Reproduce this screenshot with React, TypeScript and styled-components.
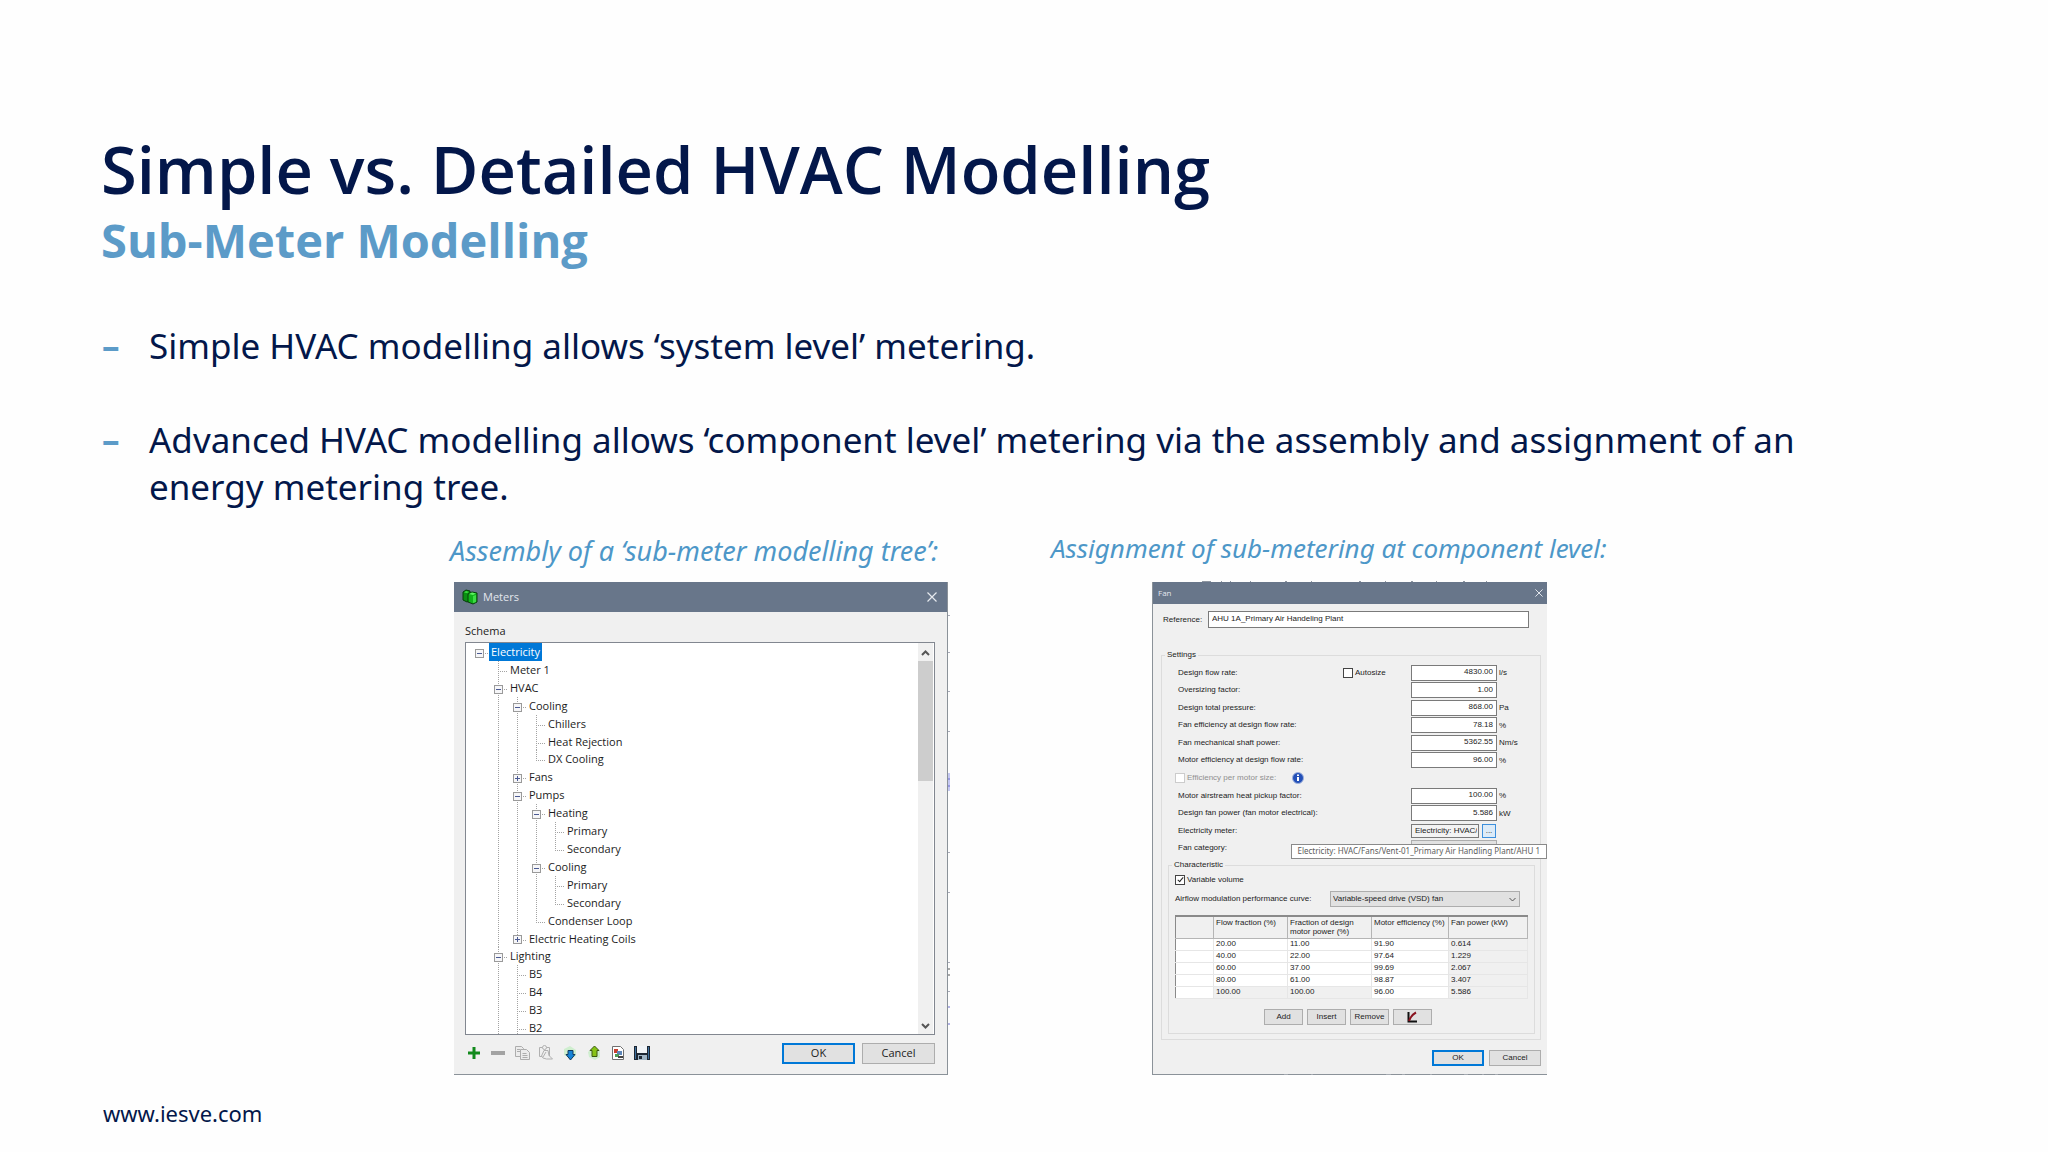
import React from "react";
import styled, { createGlobalStyle, css } from "styled-components";

const sans = `"Noto Sans", "Open Sans", sans-serif`;
const heading = `"Open Sans", "Noto Sans", sans-serif`;
const dialogFont = `"Liberation Sans", Roboto, sans-serif`;

const GlobalStyle = createGlobalStyle`
  *, *::before, *::after { box-sizing: border-box; }
  body { margin: 0; background: #fefefe; }
  button, input, select { margin: 0; padding: 0; font: inherit; color: inherit; border-radius: 0; }
`;

/* ---------- slide ---------- */

const Slide = styled.main`
  min-height: 100vh;
  padding: 133px 101px 24px;
  color: #03174a;
  font-family: ${sans};
`;
const Title = styled.h1`
  margin: 0 0 5px;
  font: 600 65px/72px ${heading};
`;
const Subtitle = styled.h2`
  margin: 0;
  color: #5c9bc8;
  font: bold 47px/60px ${heading};
`;
const Points = styled.ul`
  display: flex;
  flex-direction: column;
  gap: 47px;
  max-width: 1760px;
  margin: 52px 0 0;
  padding: 0;
  list-style: none;
  font-size: 35px;
  line-height: 47px;
`;
const Point = styled.li`
  display: flex;
  &::before { content: "–"; flex: 0 0 48px; padding-left: 1px; color: #5c9bc8; font-weight: bold; }
`;
const Figures = styled.div`
  display: flex;
  align-items: flex-end;
  gap: 103px;
  margin-top: 20px;
  padding-left: 349px;
`;
const Figure = styled.figure`
  display: flex;
  flex-direction: column;
  margin: 0;
`;
const Caption = styled.figcaption<{ $size: number; $below: number }>`
  margin-bottom: ${(p) => p.$below}px;
  color: #4d97c8;
  font-size: ${(p) => p.$size}px;
  font-style: italic;
  line-height: 36px;
  white-space: nowrap;
`;
const Site = styled.footer`
  margin-top: 23px;
  padding-left: 2px;
  font-size: 22px;
  line-height: 30px;
`;
const SiteLink = styled.a`
  color: inherit;
  text-decoration: none;
`;

/* ---------- shared dialog parts ---------- */

const TitleBar = styled.header<{ $height: number }>`
  display: flex;
  align-items: center;
  height: ${(p) => p.$height}px;
  background: #68768a;
  color: #e3e7ed;
  font-family: ${heading};
`;
const CloseButton = styled.button<{ $edge: number }>`
  display: flex;
  margin: 0 ${(p) => p.$edge}px 0 auto;
  border: 0;
  background: none;
`;
const PushButton = styled.button<{ $w: number; $h: number; $primary?: boolean }>`
  display: flex;
  align-items: center;
  justify-content: center;
  width: ${(p) => p.$w}px;
  height: ${(p) => p.$h}px;
  border: 1px solid #adadad;
  background: #e1e1e1;
  ${(p) => p.$primary && css`border: 2px solid #0078d7;`}
`;

/* ---------- meters dialog ---------- */

const Meters = styled.section`
  position: relative;
  display: flex;
  flex-direction: column;
  width: 494px;
  height: 493px;
  margin-left: 4px;
  border: 1px solid #8b9299;
  border-width: 0 1px 1px 0;
  background: #f0f0f0;
  color: #1c1c1c;
  font: 11px/18px ${heading};
`;
const MetersIcon = styled.svg`
  margin-left: 8px;
`;
const MetersTitle = styled.h3`
  margin: 0 0 0 5px;
  font: inherit;
`;
const Schema = styled.div`
  margin: 10px 11px 2px;
`;
const TreeBox = styled.div`
  display: flex;
  flex: 1;
  min-height: 0;
  margin: 0 12px 0 11px;
  padding: 0 1px 0 4px;
  overflow: hidden;
  border: 1px solid #828790;
  background: #fff;
`;
const Tree = styled.ul`
  display: grid;
  flex: 1;
  grid-auto-rows: 1fr;
  height: 394px;
  margin: 0;
  padding: 0;
  list-style: none;
`;
const TreeRow = styled.li`
  display: flex;
`;
const dots = "#a3a3a3 0 1px, transparent 1px 2px";
const Guide = styled.span<{ $kind: string }>`
  display: flex;
  align-items: center;
  justify-content: center;
  width: 19px;
  background-repeat: no-repeat;
  ${(p) => p.$kind === "v" && css`
    background-image: repeating-linear-gradient(180deg, ${dots});
    background-size: 1px 100%;
    background-position: 9px 0;
  `}
  ${(p) => p.$kind === "t" && css`
    background-image: repeating-linear-gradient(180deg, ${dots}), repeating-linear-gradient(90deg, ${dots});
    background-size: 1px 100%, 9px 1px;
    background-position: 9px 0, 9px 10px;
  `}
  ${(p) => p.$kind === "l" && css`
    background-image: repeating-linear-gradient(180deg, ${dots}), repeating-linear-gradient(90deg, ${dots});
    background-size: 1px 10px, 9px 1px;
    background-position: 9px 0, 9px 10px;
  `}
  ${(p) => p.$kind === "r" && css`
    background-image: repeating-linear-gradient(90deg, ${dots});
    background-size: 9px 1px;
    background-position: 9px 10px;
  `}
`;
const Toggle = styled.button<{ $open: boolean }>`
  width: 9px;
  height: 9px;
  margin-top: 3px;
  border: 1px solid #9a9a9a;
  background-color: #f6f6f8;
  background-image: linear-gradient(#4b5a93, #4b5a93), linear-gradient(#4b5a93, #4b5a93);
  background-size: 5px 1px, ${(p) => (p.$open ? "0 0" : "1px 5px")};
  background-position: center;
  background-repeat: no-repeat;
`;
const NodeLabel = styled.span<{ $selected?: boolean }>`
  padding: 0 2px;
  line-height: 17px;
  ${(p) => p.$selected && css`background: #0078d7; color: #fff;`}
`;
const ScrollBar = styled.div`
  display: flex;
  flex-direction: column;
  width: 15px;
  padding-top: 1px;
  background: #f0f0f0;
`;
const ScrollButton = styled.button`
  display: flex;
  align-items: center;
  justify-content: center;
  height: 17px;
  border: 0;
  background: none;
  &:last-child { margin-top: auto; }
`;
const Thumb = styled.div`
  height: 120px;
  background: #cdcdcd;
`;
const MetersFooter = styled.div`
  display: flex;
  align-items: center;
  gap: 8px;
  height: 39px;
  padding: 0 12px 3px;
`;
const Tool = styled.button`
  display: flex;
  width: 16px;
  height: 16px;
  border: 0;
  background: none;
`;
const Actions = styled.div`
  display: flex;
  gap: 7px;
  margin-left: auto;
`;
const EdgeMarks = styled.svg`
  position: absolute;
  top: 0;
  left: 100%;
`;

type Node = [label: string, guides: string, open?: boolean];
const nodes: Node[] = [
  ["Electricity", "r", true],
  ["Meter 1", "-t"],
  ["HVAC", "-t", true],
  ["Cooling", "-vt", true],
  ["Chillers", "-vvt"],
  ["Heat Rejection", "-vvt"],
  ["DX Cooling", "-vvl"],
  ["Fans", "-vt", false],
  ["Pumps", "-vt", true],
  ["Heating", "-vvt", true],
  ["Primary", "-vvvt"],
  ["Secondary", "-vvvl"],
  ["Cooling", "-vvt", true],
  ["Primary", "-vvvt"],
  ["Secondary", "-vvvl"],
  ["Condenser Loop", "-vvl"],
  ["Electric Heating Coils", "-vl", false],
  ["Lighting", "-t", true],
  ["B5", "-vt"],
  ["B4", "-vt"],
  ["B3", "-vt"],
  ["B2", "-vt"],
];

const tools: [string, React.ReactNode][] = [
  ["Add", <path d="M8 2v12M2 8h12" stroke="#128a1c" strokeWidth="3" />],
  ["Remove", <path d="M1 8h14" stroke="#a3a3a3" strokeWidth="4" />],
  ["Copy", <g fill="#ececec" stroke="#adadad"><path d="M1.500 1.500h6l2 2v8h-8z" /><path d="M6.500 4.500h6l3 3v7h-9z" /><path d="M3 4.500h3M3 6.500h3M8.500 8.500h4M8.500 10.500h5M8.500 12.500h5" /></g>],
  ["Paste", <g fill="#efefef" stroke="#b0b0b0"><path d="M1.500 2.500h10v6M1.500 2.500v9h3" /><path d="M6 5.500h4l1 5 3.500 3.500H8.500L5 13l-1.500-2z" /><path d="M8 7l-3 5M11.500 4v7" /><circle cx="6.500" cy="2.500" r="2" /></g>],
  ["Import", <g><path d="M2 4l6-3 6 4v6l-5 3-7-4z" fill="#cfeecf" /><path d="M6 5.500h5v4h2L8.500 15 4 9.500h2z" fill="#1684d8" stroke="#12395c" /></g>],
  ["Export", <g><path d="M2 7l5-4 7 3v6l-5 3-6-3z" fill="#cfeecf" /><path d="M6 11.500h5v-6h2L8.500 1 4 5.500h2z" fill="#86c414" stroke="#3a5a10" /></g>],
  ["Report", <g><path d="M2.500 1.500h8l3 3v10h-11z" fill="#fff" stroke="#6f6f6f" /><path d="M4 4h4v4H4z" fill="#c8402e" /><path d="M7 6h5v4H7z" fill="#5d86b8" /><path d="M5 9h4v3H5z" fill="#4d9b55" /><path d="M8 12h5" stroke="#444" strokeWidth="2" /></g>],
  ["Save", <g><path d="M0 1h16v14H0z" fill="#1d2733" /><path d="M3 1h10v7H3z" fill="#f2f5f8" /><path d="M1.500 2v12M14.500 2v12" stroke="#3d6f9c" /><path d="M4 10h9v5H4z" fill="#9fb4c4" /><path d="M5 11h3v3H5z" fill="#1d2733" /></g>],
];

const Cross = ({ size }: { size: number }) => (
  <svg width={size} height={size} viewBox="0 0 10 10" stroke="#e6e9ee" strokeWidth="1.200"><path d="M.5.5l9 9M9.500.5l-9 9" /></svg>
);

function MetersDialog() {
  return (
    <Meters aria-label="Meters">
      <TitleBar $height={30}>
        <MetersIcon width="16" height="16" viewBox="0 0 16 16">
          <path d="M1 3l3-2 4 1v10l-3 1-4-2z" fill="#0a8f12" stroke="#063f08" />
          <path d="M2 3.500l2-1.500 3 1-2 1z" fill="#3be03f" />
          <path d="M6 5l4-2 5 1v9l-4 2-5-2z" fill="#10b31a" stroke="#063f08" />
          <path d="M7 5l3-1.500 4 1-3 1.500z" fill="#5cf060" />
          <path d="M11 7l3-1v7l-3 1z" fill="#3ddc45" />
        </MetersIcon>
        <MetersTitle>Meters</MetersTitle>
        <CloseButton aria-label="Close" $edge={10}><Cross size={10} /></CloseButton>
      </TitleBar>
      <Schema>Schema</Schema>
      <TreeBox>
        <Tree>
          {nodes.map(([label, guides, open], i) => (
            <TreeRow key={i}>
              {guides.split("").map((kind, g) => (
                <Guide key={g} $kind={kind}>
                  {g === guides.length - 1 && open !== undefined && (
                    <Toggle $open={open} aria-label={`Toggle ${label}`} aria-expanded={open} />
                  )}
                </Guide>
              ))}
              <NodeLabel $selected={i === 0}>{label}</NodeLabel>
            </TreeRow>
          ))}
        </Tree>
        <ScrollBar>
          <ScrollButton aria-label="Scroll up">
            <svg width="9" height="6" fill="none" stroke="#555" strokeWidth="2"><path d="M1 5l3.500-3.500L8 5" /></svg>
          </ScrollButton>
          <Thumb />
          <ScrollButton aria-label="Scroll down">
            <svg width="9" height="6" fill="none" stroke="#555" strokeWidth="2"><path d="M1 1l3.500 3.500L8 1" /></svg>
          </ScrollButton>
        </ScrollBar>
      </TreeBox>
      <MetersFooter>
        {tools.map(([name, art]) => (
          <Tool key={name} aria-label={name}><svg width="16" height="16" fill="none">{art}</svg></Tool>
        ))}
        <Actions>
          <PushButton $w={73} $h={21} $primary>OK</PushButton>
          <PushButton $w={73} $h={21}>Cancel</PushButton>
        </Actions>
      </MetersFooter>
      <EdgeMarks width="3" height="493" aria-hidden="true">
        <path d="M1 33.500h2M1 70.500h2M1 109.500h2M1 149.500h2M1 270.500h2M1 310.500h2M1 380.500h2M1 409.500h2" stroke="#a9abb8" />
        <path d="M1 191h2v18H1z" fill="#c5c8f2" />
        <path d="M1 197h2M1 204h2M1 425h2M1 442h2" stroke="#6a6ad0" />
        <path d="M1 387h2M1 393h2" stroke="#555" />
      </EdgeMarks>
    </Meters>
  );
}

/* ---------- fan dialog ---------- */

const Fan = styled.section`
  position: relative;
  width: 395px;
  height: 493px;
  margin-left: 101px;
  border: 1px solid #8b9299;
  border-width: 0 0 1px 1px;
  background: #f0f0f0;
  color: #1c1c1c;
  font: 8px/10px ${dialogFont};
`;
const FanTitle = styled.h3`
  margin: 0 0 0 5px;
  font: inherit;
`;
const Reference = styled.div`
  display: flex;
  align-items: center;
  margin: 7px 18px 0 10px;
`;
const ReferenceLabel = styled.label`
  width: 45px;
`;
const ReferenceInput = styled.input`
  flex: 1;
  height: 17px;
  padding: 0 3px 2px;
  border: 1px solid #7a7a7a;
  background: #fff;
`;
const Settings = styled.fieldset`
  margin: 22px 6px 0 8px;
  padding: 0 5px 5px 6px;
  border: 1px solid #dcdcdc;
`;
const Legend = styled.legend`
  margin-left: -3px;
  padding: 0 2px;
`;
const Rows = styled.div`
  display: grid;
  grid-auto-rows: 1fr;
  height: 197px;
  padding: 4px 0 0 10px;
`;
const Row = styled.div`
  display: grid;
  grid-template-columns: 165px 68px 86px auto;
  align-items: center;
`;
const CheckLabel = styled.label<{ $muted?: boolean }>`
  display: flex;
  align-items: center;
  gap: 2px;
  color: ${(p) => (p.$muted ? "#8f8f8f" : "inherit")};
`;
const Check = styled.input`
  appearance: none;
  display: flex;
  justify-content: center;
  width: 10px;
  height: 10px;
  border: 1px solid #444;
  background: #fff;
  &:disabled { border-color: #ccc; }
  &:checked::after {
    content: "";
    width: 3px;
    height: 6px;
    border: solid #222;
    border-width: 0 1px 1px 0;
    transform: rotate(40deg);
  }
`;
const InlineRow = styled.div`
  display: flex;
  align-items: center;
  gap: 16px;
  margin-left: -3px;
`;
const Value = styled.input`
  grid-column: 3;
  width: 86px;
  height: 16px;
  padding: 0 3px 2px;
  border: 1px solid #7a7a7a;
  background: #fff;
  text-align: right;
`;
const Unit = styled.span`
  padding: 1px 0 0 2px;
`;
const MeterField = styled.div`
  position: relative;
  display: flex;
  grid-column: 3;
  gap: 3px;
`;
const MeterInput = styled.input`
  width: 68px;
  height: 14px;
  padding: 0 1px 0 3px;
  border: 1px solid #7a7a7a;
  background: #f3f3f3;
`;
const Browse = styled.button`
  width: 14px;
  height: 14px;
  border: 1px solid #3c8fdc;
  background: #dcebf8;
  line-height: 8px;
`;
const Tooltip = styled.div`
  position: absolute;
  top: 20px;
  right: -50px;
  z-index: 1;
  height: 15px;
  padding: 0 6px 0 5px;
  border: 1px solid #8a8a8a;
  background: #fff;
  color: #5c5c5c;
  font: 8px/12px ${sans};
  white-space: nowrap;
`;
const Category = styled.select`
  grid-column: 3;
  width: 86px;
  height: 16px;
  border: 1px solid #adadad;
  background: #e1e1e1;
`;
const Characteristic = styled.fieldset`
  margin: 3px 0 0;
  padding: 5px 6px 8px;
  border: 1px solid #dcdcdc;
`;
const CurveRow = styled.div`
  display: flex;
  align-items: center;
  justify-content: space-between;
  margin: 6px 8px 8px 0;
`;
const SelectBox = styled.div`
  display: flex;
  align-items: center;
  width: 190px;
  height: 16px;
  padding-right: 3px;
  border: 1px solid #adadad;
  background: #e1e1e1;
`;
const CurveSelect = styled.select`
  flex: 1;
  appearance: none;
  padding-left: 2px;
  border: 0;
  background: none;
`;
const Curve = styled.table`
  width: 352px;
  border-collapse: collapse;
  table-layout: fixed;
  border: 1px solid #8a8a8a;
  border-width: 2px 0 0 1px;
  background: #fff;
`;
const HeadCell = styled.th<{ $w: number }>`
  width: ${(p) => p.$w}px;
  height: 22px;
  padding: 1px 2px 0;
  border: 1px solid #b5b5b5;
  border-top: 2px solid #8a8a8a;
  background: #f0f0f0;
  font-weight: normal;
  line-height: 9px;
  text-align: left;
  vertical-align: top;
  white-space: pre-line;
  &:first-child { border-left-color: #8a8a8a; }
`;
const Cell = styled.td<{ $grey: boolean }>`
  height: 12px;
  padding: 0 2px;
  border: 1px solid #e6e6e6;
  background: ${(p) => (p.$grey ? "#f0f0f0" : "#fff")};
  &:first-child { border-left-color: #8a8a8a; }
`;
const CurveButtons = styled.div`
  display: flex;
  gap: 4px;
  margin: 10px 0 0 89px;
`;
const FanActions = styled.div`
  display: flex;
  justify-content: flex-end;
  gap: 5px;
  margin: 10px 6px 0;
`;
const TopMarks = styled.svg`
  position: absolute;
  bottom: 100%;
  left: 48px;
`;
const BottomMarks = styled.svg`
  position: absolute;
  top: 100%;
  left: 130px;
`;

const settings: [string, string, string][] = [
  ["Design flow rate:", "4830.00", "l/s"],
  ["Oversizing factor:", "1.00", ""],
  ["Design total pressure:", "868.00", "Pa"],
  ["Fan efficiency at design flow rate:", "78.18", "%"],
  ["Fan mechanical shaft power:", "5362.55", "Nm/s"],
  ["Motor efficiency at design flow rate:", "96.00", "%"],
];
const motor: [string, string, string][] = [
  ["Motor airstream heat pickup factor:", "100.00", "%"],
  ["Design fan power (fan motor electrical):", "5.586", "kW"],
];
const columns: [string, number][] = [
  ["", 38],
  ["Flow fraction (%)", 74],
  ["Fraction of design\nmotor power (%)", 84],
  ["Motor efficiency (%)", 77],
  ["Fan power (kW)", 79],
];
const curve = [
  ["", "20.00", "11.00", "91.90", "0.614"],
  ["", "40.00", "22.00", "97.64", "1.229"],
  ["", "60.00", "37.00", "99.69", "2.067"],
  ["", "80.00", "61.00", "98.87", "3.407"],
  ["", "100.00", "100.00", "96.00", "5.586"],
];

function SettingRow({ row: [label, value, unit], children }: { row: [string, string, string]; children?: React.ReactNode }) {
  return (
    <Row>
      <label htmlFor={label}>{label}</label>
      {children}
      <Value id={label} defaultValue={value} />
      <Unit>{unit}</Unit>
    </Row>
  );
}

function FanDialog() {
  return (
    <Fan aria-label="Fan">
      <TopMarks width="300" height="2" aria-hidden="true">
        <path d="M1 1.500h9M20 1.500h1M29 1.500h1M49 1.500h1M84 1.500h2M110 1.500h1M158 1.500h2M184 1.500h1M210 1.500h2M235 1.500h1M262 1.500h2M285 1.500h1" stroke="#8f96a1" />
      </TopMarks>
      <TitleBar $height={22}>
        <FanTitle>Fan</FanTitle>
        <CloseButton aria-label="Close" $edge={4}><Cross size={8} /></CloseButton>
      </TitleBar>
      <Reference>
        <ReferenceLabel htmlFor="reference">Reference:</ReferenceLabel>
        <ReferenceInput id="reference" defaultValue="AHU 1A_Primary Air Handeling Plant" />
      </Reference>
      <Settings>
        <Legend>Settings</Legend>
        <Rows>
          {settings.map((row, i) => (
            <SettingRow key={row[0]} row={row}>
              {i === 0 && <CheckLabel><Check type="checkbox" />Autosize</CheckLabel>}
            </SettingRow>
          ))}
          <InlineRow>
            <CheckLabel $muted><Check type="checkbox" disabled />Efficiency per motor size:</CheckLabel>
            <svg width="12" height="12" viewBox="0 0 12 12">
              <circle cx="6" cy="6" r="5.500" fill="#2450b8" stroke="#9fb2dc" />
              <path d="M5 5h2v4H5zM5 2.500h2v1.500H5z" fill="#fff" />
            </svg>
          </InlineRow>
          {motor.map((row) => <SettingRow key={row[0]} row={row} />)}
          <Row>
            <label htmlFor="meter">Electricity meter:</label>
            <MeterField>
              <MeterInput id="meter" readOnly value="Electricity: HVAC/Fans" />
              <Browse aria-label="Browse meters">...</Browse>
              <Tooltip role="tooltip">Electricity: HVAC/Fans/Vent-01_Primary Air Handling Plant/AHU 1</Tooltip>
            </MeterField>
          </Row>
          <Row>
            <label htmlFor="category">Fan category:</label>
            <Category id="category" />
          </Row>
        </Rows>
        <Characteristic>
          <Legend>Characteristic</Legend>
          <CheckLabel><Check type="checkbox" defaultChecked />Variable volume</CheckLabel>
          <CurveRow>
            <label htmlFor="curve">Airflow modulation performance curve:</label>
            <SelectBox>
              <CurveSelect id="curve"><option>Variable-speed drive (VSD) fan</option></CurveSelect>
              <svg width="7" height="5" fill="none" stroke="#555"><path d="M.5 1l3 3 3-3" /></svg>
            </SelectBox>
          </CurveRow>
          <Curve>
            <thead>
              <tr>{columns.map(([name, w]) => <HeadCell key={name} $w={w}>{name}</HeadCell>)}</tr>
            </thead>
            <tbody>
              {curve.map((cells, r) => (
                <tr key={r}>
                  {cells.map((text, c) => (
                    <Cell key={c} $grey={c === 4 || (r === 4 && (c === 1 || c === 2))}>{text}</Cell>
                  ))}
                </tr>
              ))}
            </tbody>
          </Curve>
          <CurveButtons>
            <PushButton $w={39} $h={16}>Add</PushButton>
            <PushButton $w={39} $h={16}>Insert</PushButton>
            <PushButton $w={39} $h={16}>Remove</PushButton>
            <PushButton $w={39} $h={16} aria-label="Show curve">
              <svg width="11" height="12" fill="none">
                <path d="M1.500 1v9.500H10" stroke="#111" strokeWidth="2" />
                <path d="M2 10Q4 4 9 1.500" stroke="#8a1420" strokeWidth="2" />
              </svg>
            </PushButton>
          </CurveButtons>
        </Characteristic>
      </Settings>
      <FanActions>
        <PushButton $w={52} $h={16} $primary>OK</PushButton>
        <PushButton $w={52} $h={16}>Cancel</PushButton>
      </FanActions>
      <BottomMarks width="260" height="2" aria-hidden="true">
        <path d="M1 .5h4M28 .5h2M103 .5h5M119 .5h3M147 .5h2M181 .5h4M199 .5h2M212 .5h3" stroke="#a4a9b0" />
      </BottomMarks>
    </Fan>
  );
}

export default function App() {
  return (
    <>
      <GlobalStyle />
      <Slide>
        <Title>Simple vs. Detailed HVAC Modelling</Title>
        <Subtitle>Sub-Meter Modelling</Subtitle>
        <Points>
          <Point>Simple HVAC modelling allows ‘system level’ metering.</Point>
          <Point>Advanced HVAC modelling allows ‘component level’ metering via the assembly and assignment of an energy metering tree.</Point>
        </Points>
        <Figures>
          <Figure>
            <Caption $size={27} $below={13}>Assembly of a ‘sub-meter modelling tree’:</Caption>
            <MetersDialog />
          </Figure>
          <Figure>
            <Caption $size={26} $below={16}>Assignment of sub-metering at component level:</Caption>
            <FanDialog />
          </Figure>
        </Figures>
        <Site><SiteLink href="https://www.iesve.com">www.iesve.com</SiteLink></Site>
      </Slide>
    </>
  );
}
